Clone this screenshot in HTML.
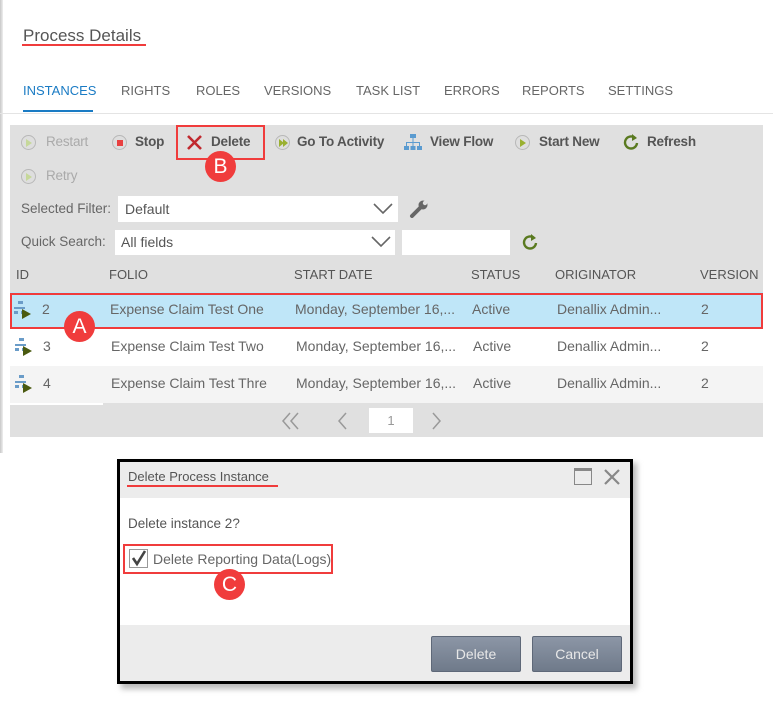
<!DOCTYPE html>
<html><head><meta charset="utf-8"><style>
*{margin:0;padding:0;box-sizing:border-box}
body{width:773px;height:705px;background:#fff;font-family:"Liberation Sans",sans-serif;position:relative;overflow:hidden;color:#666}
.a{position:absolute;white-space:nowrap}
.tab{position:absolute;top:83px;font-size:13px;color:#666}
.tb{position:absolute;font-size:13.5px;color:#555;font-weight:bold;letter-spacing:-0.2px}
.ic{position:absolute;width:15px;height:15px;border-radius:50%;background:#dedede;border:1.5px solid #b8b8b8}
.row{position:absolute;left:10px;width:753px;height:37px;font-size:14px;color:#666}
.row span{position:absolute;top:9px}
.hd{position:absolute;top:267px;font-size:13px;color:#555}
.circ{position:absolute;width:31px;height:31px;border-radius:50%;background:#f03c3c;color:#fff;font-size:21px;text-align:center;line-height:31px;font-family:"Liberation Sans",sans-serif}
</style></head><body>
<div class="a" style="left:0;top:0;width:3px;height:453px;background:linear-gradient(90deg,#c8c8c8,#eee)"></div>
<div class="a" style="left:23px;top:26px;font-size:17px;color:#555">Process Details</div>
<div class="a" style="left:22px;top:44px;width:124px;height:2px;background:#f03c3c"></div>
<div class="tab" style="left:23px;color:#1a7bc4">INSTANCES</div>
<div class="tab" style="left:121px">RIGHTS</div>
<div class="tab" style="left:196px">ROLES</div>
<div class="tab" style="left:264px">VERSIONS</div>
<div class="tab" style="left:356px">TASK LIST</div>
<div class="tab" style="left:444px">ERRORS</div>
<div class="tab" style="left:522px">REPORTS</div>
<div class="tab" style="left:608px">SETTINGS</div>
<div class="a" style="left:23px;top:110px;width:70px;height:2px;background:#1a7bc4"></div>
<div class="a" style="left:0;top:113px;width:773px;height:1px;background:#e4e4e4"></div>

<div class="a" style="left:10px;top:125px;width:753px;height:312px;background:#e0e0e0"></div>
<div class="ic" style="left:21px;top:135px"></div><div class="a" style="left:26px;top:139px;border-left:6px solid #c6d89a;border-top:4px solid transparent;border-bottom:4px solid transparent"></div>
<div class="tb" style="left:46px;top:134px;color:#aaa;font-weight:normal">Restart</div>
<div class="ic" style="left:112px;top:135px"></div><div class="a" style="left:117px;top:140px;width:6px;height:6px;background:#e84040"></div>
<div class="tb" style="left:135px;top:134px">Stop</div>
<svg class="a" style="left:186px;top:134px" width="17" height="17"><path d="M2 2L15 15M15 2L2 15" stroke="#c0282e" stroke-width="2.6"/></svg>
<div class="tb" style="left:211px;top:134px">Delete</div>
<div class="a" style="left:176px;top:125px;width:89px;height:35px;border:2px solid #f03c3c"></div>
<div class="ic" style="left:275px;top:135px"></div><div class="a" style="left:279px;top:139px;border-left:5px solid #9ab030;border-top:4px solid transparent;border-bottom:4px solid transparent"></div><div class="a" style="left:283px;top:139px;border-left:5px solid #9ab030;border-top:4px solid transparent;border-bottom:4px solid transparent"></div>
<div class="tb" style="left:297px;top:134px">Go To Activity</div>
<svg class="a" style="left:404px;top:134px" width="18" height="17"><g fill="#5a9bd0"><rect x="6" y="0" width="6" height="4"/><rect x="0" y="12" width="5" height="4"/><rect x="6.5" y="12" width="5" height="4"/><rect x="13" y="12" width="5" height="4"/><rect x="8.5" y="4" width="1" height="4"/><rect x="2" y="8" width="14" height="1"/><rect x="2" y="8" width="1" height="4"/><rect x="8.5" y="8" width="1" height="4"/><rect x="15" y="8" width="1" height="4"/></g></svg>
<div class="tb" style="left:430px;top:134px">View Flow</div>
<div class="ic" style="left:515px;top:135px"></div><div class="a" style="left:520px;top:139px;border-left:6px solid #9ab030;border-top:4px solid transparent;border-bottom:4px solid transparent"></div>
<div class="tb" style="left:539px;top:134px">Start New</div>
<svg class="a" style="left:622px;top:133px" width="18" height="18"><path d="M13 5A6 6 0 1 0 15 10" fill="none" stroke="#5a7a20" stroke-width="2.4"/><path d="M10 1L15 5L10 8Z" fill="#5a7a20"/></svg>
<div class="tb" style="left:647px;top:134px">Refresh</div>
<div class="ic" style="left:21px;top:169px"></div><div class="a" style="left:26px;top:173px;border-left:6px solid #c6d89a;border-top:4px solid transparent;border-bottom:4px solid transparent"></div>
<div class="tb" style="left:46px;top:168px;color:#aaa;font-weight:normal">Retry</div>
<div class="circ" style="left:205px;top:151px">B</div>
<div class="a" style="left:21px;top:201px;font-size:13.5px;color:#666">Selected Filter:</div>
<div class="a" style="left:118px;top:196px;width:280px;height:26px;background:#fff"></div>
<div class="a" style="left:125px;top:201px;font-size:14px;color:#555">Default</div>
<svg class="a" style="left:373px;top:203px" width="20" height="12"><path d="M1 1L10 10L19 1" fill="none" stroke="#666" stroke-width="1.6"/></svg>
<svg class="a" style="left:409px;top:200px" width="20" height="18"><path d="M3 16L11 8" stroke="#666" stroke-width="4" stroke-linecap="round"/><circle cx="14" cy="5" r="4.5" fill="#666"/><circle cx="16" cy="3" r="2.2" fill="#e0e0e0"/></svg>
<div class="a" style="left:21px;top:234px;font-size:13.5px;color:#666">Quick Search:</div>
<div class="a" style="left:115px;top:230px;width:280px;height:25px;background:#fff"></div>
<div class="a" style="left:121px;top:234px;font-size:14px;color:#555">All fields</div>
<svg class="a" style="left:371px;top:236px" width="20" height="12"><path d="M1 1L10 10L19 1" fill="none" stroke="#666" stroke-width="1.6"/></svg>
<div class="a" style="left:402px;top:230px;width:108px;height:25px;background:#fff"></div>
<svg class="a" style="left:521px;top:233px" width="18" height="18"><path d="M13 5A6 6 0 1 0 15 10" fill="none" stroke="#5a7a20" stroke-width="2.4"/><path d="M10 1L15 5L10 8Z" fill="#5a7a20"/></svg>
<div class="a" style="left:10px;top:259px;width:753px;height:34px;background:#e0e0e0"></div>
<div class="hd" style="left:16px">ID</div>
<div class="hd" style="left:109px">FOLIO</div>
<div class="hd" style="left:294px">START DATE</div>
<div class="hd" style="left:471px">STATUS</div>
<div class="hd" style="left:555px">ORIGINATOR</div>
<div class="hd" style="left:700px">VERSION</div>
<div class="row" style="top:292px;background:#bfe6f8"><span style="left:32px">2</span><span style="left:100px">Expense Claim Test One</span><span style="left:285px">Monday, September 16,...</span><span style="left:462px">Active</span><span style="left:547px">Denallix Admin...</span><span style="left:691px">2</span></div>
<div class="row" style="top:329px;background:#fff"><span style="left:33px">3</span><span style="left:101px">Expense Claim Test Two</span><span style="left:286px">Monday, September 16,...</span><span style="left:463px">Active</span><span style="left:547px">Denallix Admin...</span><span style="left:691px">2</span></div>
<div class="row" style="top:366px;background:#f4f4f4"><span style="left:33px">4</span><span style="left:101px">Expense Claim Test Thre</span><span style="left:286px">Monday, September 16,...</span><span style="left:463px">Active</span><span style="left:547px">Denallix Admin...</span><span style="left:691px">2</span></div>
<svg class="a" style="left:14px;top:301px" width="20" height="18"><g fill="#6a9cc8"><rect x="4" y="0" width="5" height="3"/><rect x="0" y="6" width="11" height="2"/><rect x="0" y="10" width="4" height="3"/><rect x="7" y="10" width="4" height="3"/></g><path d="M8 8L8 18L17 13Z" fill="#4a5a10"/></svg>
<svg class="a" style="left:15px;top:338px" width="20" height="18"><g fill="#6a9cc8"><rect x="4" y="0" width="5" height="3"/><rect x="0" y="6" width="11" height="2"/><rect x="0" y="10" width="4" height="3"/><rect x="7" y="10" width="4" height="3"/></g><path d="M8 8L8 18L17 13Z" fill="#4a5a10"/></svg>
<svg class="a" style="left:15px;top:375px" width="20" height="18"><g fill="#6a9cc8"><rect x="4" y="0" width="5" height="3"/><rect x="0" y="6" width="11" height="2"/><rect x="0" y="10" width="4" height="3"/><rect x="7" y="10" width="4" height="3"/></g><path d="M8 8L8 18L17 13Z" fill="#4a5a10"/></svg>
<div class="a" style="left:10px;top:293px;width:753px;height:36px;border:2.5px solid #f03c3c"></div>
<div class="circ" style="left:64px;top:311px">A</div>
<div class="a" style="left:10px;top:403px;width:93px;height:2px;background:#fff"></div>
<svg class="a" style="left:281px;top:411px" width="20" height="20"><path d="M9 2L2 10L9 18M17 2L10 10L17 18" fill="none" stroke="#999" stroke-width="1.5"/></svg>
<svg class="a" style="left:337px;top:411px" width="12" height="20"><path d="M9 2L2 10L9 18" fill="none" stroke="#999" stroke-width="1.5"/></svg>
<div class="a" style="left:369px;top:408px;width:44px;height:25px;background:#fff;text-align:center;line-height:25px;font-size:13px;color:#999">1</div>
<svg class="a" style="left:431px;top:411px" width="12" height="20"><path d="M2 2L9 10L2 18" fill="none" stroke="#999" stroke-width="1.5"/></svg>
<div class="a" style="left:121px;top:463px;width:516px;height:226px;background:#bbb;filter:blur(3px)"></div>
<div class="a" style="left:117px;top:459px;width:516px;height:225px;border:3px solid #000;background:#fff"></div>
<div class="a" style="left:120px;top:462px;width:510px;height:36px;background:#ececec"></div>
<div class="a" style="left:128px;top:469px;font-size:13px;color:#555">Delete Process Instance</div>
<div class="a" style="left:127px;top:485px;width:151px;height:2px;background:#f03c3c"></div>
<div class="a" style="left:574px;top:468px;width:18px;height:17px;border:1.5px solid #888;border-top:3px solid #888"></div>
<svg class="a" style="left:603px;top:468px" width="18" height="18"><path d="M2 2L16 16M16 2L2 16" stroke="#888" stroke-width="2.2"/></svg>
<div class="a" style="left:128px;top:516px;font-size:13.5px;color:#555">Delete instance 2?</div>
<div class="a" style="left:129px;top:549px;width:19px;height:19px;border:1px solid #999;background:#fff"></div>
<svg class="a" style="left:130px;top:549px" width="18" height="18"><path d="M3 9L7 15L15 2" fill="none" stroke="#444" stroke-width="2.6"/></svg>
<div class="a" style="left:153px;top:551px;font-size:14px;color:#666">Delete Reporting Data(Logs)</div>
<div class="a" style="left:123px;top:544px;width:210px;height:30px;border:2px solid #f03c3c"></div>
<div class="circ" style="left:214px;top:569px">C</div>
<div class="a" style="left:120px;top:625px;width:510px;height:56px;background:#ececec"></div>
<div class="a" style="left:431px;top:636px;width:90px;height:36px;background:linear-gradient(#8c96a6,#6f7a8a);border:1px solid #5e6878;border-radius:2px;color:#e8e8e8;font-size:14px;text-align:center;line-height:34px">Delete</div>
<div class="a" style="left:532px;top:636px;width:90px;height:36px;background:linear-gradient(#8c96a6,#6f7a8a);border:1px solid #5e6878;border-radius:2px;color:#e8e8e8;font-size:14px;text-align:center;line-height:34px">Cancel</div>
</body></html>
